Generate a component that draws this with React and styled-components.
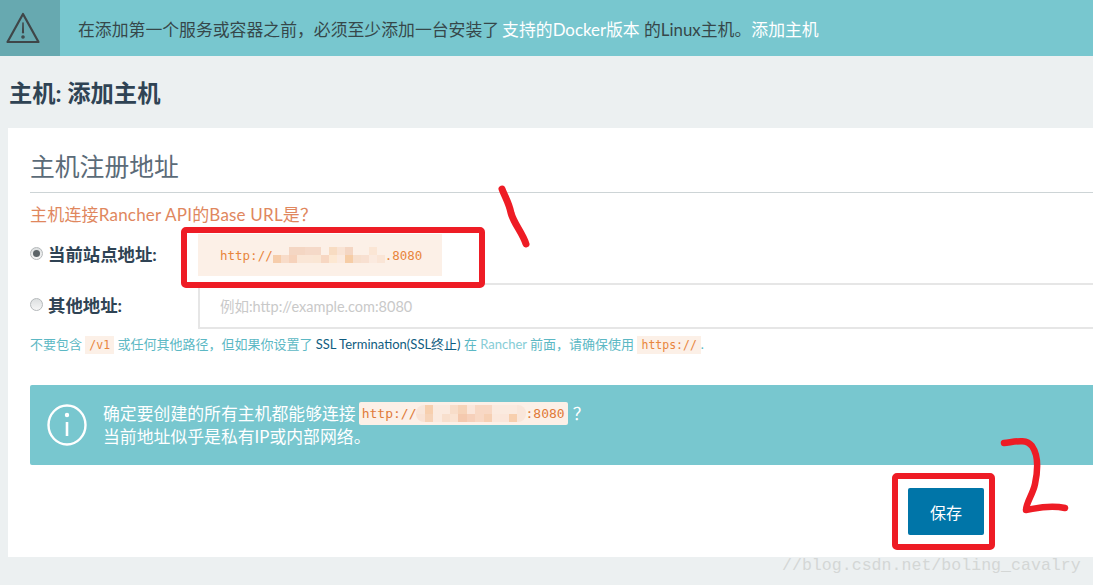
import React from "react";
import styled, { createGlobalStyle } from "styled-components";

const blurTop = [
  "transparent", "transparent", "#f4d6c3", "#f4d6c3", "#f5d9c8", "#f5d9c8", "transparent", "#f8dcc2", "#f9e3d4", "#f4d6c3", "transparent", "transparent", "#fbe6d5", "transparent",
  "#f6cdab", "#f8dcc9", "#f6d2bb", "#fae6d6", "#fae6d6", "#fae6d4", "#f7d7c2", "#fde8d2", "#fbeadf", "#f6cda6", "#f7dfcd", "#f8e0d1", "#fbeadf", "#fae5d6",
];
const blurInfo = [
  "#f9e6da", "#f7cfae", "#fbeadf", "#fbeadf", "#f8ddc9", "#f6d3b8", "#fbe6da", "#f8d8c4", "#f8d8c4", "#fbeadf", "#fbeadf", "#fbeadf", "#f9e6da",
  "#f9e2d4", "#f6d3b8", "#fbeadf", "#f8dfcd", "#fae3d2", "#f4c9ae", "#f6d0ba", "#f8d8c4", "#f6d0b4", "#fbe8dc", "#fbe6da", "#f7cfae", "#f9e6da",
];

const App = () => {
  return (
    <Page>
      <GlobalStyle />
      <Banner>
        <BannerIcon>
          <svg width="36" height="34" viewBox="0 0 36 34" fill="none" stroke="#3f4648" strokeWidth="2.2" strokeLinejoin="round">
            <path d="M18 3 L33.5 31 H2.5 Z" />
            <path d="M18 11.5 L18.6 22 H17.4 Z" strokeWidth="1" fill="#3f4648" />
            <circle cx="18" cy="26" r="0.7" fill="#3f4648" />
          </svg>
        </BannerIcon>
        <BannerText>
          在添加第一个服务或容器之前，必须至少添加一台安装了<a>支持的Docker版本</a> 的Linux主机。<a>添加主机</a>
        </BannerText>
      </Banner>

      <Heading>主机: 添加主机</Heading>

      <Card>
        <SectionTitle>主机注册地址</SectionTitle>
        <Question>主机连接Rancher API的Base URL是？</Question>

        <Row $height={42} $mt={8}>
          <Radio $checked />
          <Label>当前站点地址:</Label>
          <AddressBox>
            <span>http://</span>
            <Mosaic $cols={14} $w={8} $h={8}>
              {blurTop.map((c, i) => (
                <i key={i} style={{ background: c }} />
              ))}
            </Mosaic>
            <span>.8080</span>
          </AddressBox>
        </Row>

        <Row $height={46} $mt={7}>
          <Radio />
          <Label>其他地址:</Label>
          <AddressInput placeholder="例如:http://example.com:8080" readOnly />
        </Row>

        <Hint>
          不要包含 <Code>/v1</Code> 或任何其他路径，但如果你设置了 <b>SSL Termination(SSL终止)</b> 在 <em>Rancher</em> 前面，请确保使用 <Code>https://</Code>.
        </Hint>

        <InfoBox>
          <svg width="42" height="44" viewBox="0 0 42 44" fill="none" stroke="#fff" strokeWidth="2.4">
            <ellipse cx="21" cy="22" rx="18.5" ry="19.5" />
            <path d="M21 19 V33" strokeWidth="2.6" />
            <circle cx="21" cy="12" r="1" fill="#fff" />
          </svg>
          <InfoText>
            <InfoLine>
              确定要创建的所有主机都能够连接
              <InlineUrl>
                http://
                <Mosaic $cols={13} $w={8.4} $h={8.5} $round>
                  {blurInfo.map((c, i) => (
                    <i key={i} style={{ background: c }} />
                  ))}
                </Mosaic>
                :8080
              </InlineUrl>
              ？
            </InfoLine>
            <InfoLine>当前地址似乎是私有IP或内部网络。</InfoLine>
          </InfoText>
        </InfoBox>

        <Footer>
          <SaveButton>保存</SaveButton>
        </Footer>
      </Card>

      <Watermark>//blog.csdn.net/boling_cavalry</Watermark>

      <Marks width="1093" height="585" viewBox="0 0 1093 585" fill="none" stroke="#ee1c25">
        <rect x="184" y="230" width="298" height="55" rx="2" strokeWidth="6" />
        <rect x="895" y="476" width="97" height="71" rx="2" strokeWidth="6" />
        <path d="M502 189 C505 197 509 203 511 213 C514 224 522 232 526 244" strokeWidth="7" strokeLinecap="round" />
        <path d="M1004 443 C1014 442 1026 438 1032 446 C1039 456 1038 470 1035 484 C1033 494 1026 503 1026 510 C1034 509 1048 504 1065 508" strokeWidth="6.5" strokeLinecap="round" strokeLinejoin="round" />
      </Marks>
    </Page>
  );
};

const fontStack = `Lato, "Noto Sans CJK SC", sans-serif`;
const monoStack = `"DejaVu Sans Mono", "Liberation Mono", monospace`;

const GlobalStyle = createGlobalStyle`
  html, body {
    margin: 0;
    padding: 0;
    background: #ecf0f1;
    overflow: hidden;
  }
  * {
    box-sizing: border-box;
  }
`;

const Page = styled.div`
  position: relative;
  width: 1093px;
  height: 585px;
  overflow: hidden;
  background: #ecf0f1;
  font-family: ${fontStack};
`;

const Banner = styled.div`
  display: flex;
  align-items: center;
  height: 56px;
  background: #78c7cf;
`;

const BannerIcon = styled.div`
  display: flex;
  align-items: center;
  width: 60px;
  height: 56px;
  padding-left: 5px;
  background: #67a9b0;
`;

const BannerText = styled.div`
  margin-left: 18px;
  font-size: 16.85px;
  color: #36474a;
  white-space: nowrap;
  > a {
    color: #fff;
  }
  > a:first-child {
    margin-left: 3px;
  }
`;

const Heading = styled.h1`
  margin: 0;
  height: 72px;
  padding: 22px 0 0 9px;
  font-size: 23.3px;
  line-height: 30px;
  font-weight: 700;
  color: #2f4354;
`;

const Card = styled.div`
  margin-left: 8px;
  height: 429px;
  padding: 21px 0 0 22px;
  background: #fff;
`;

const SectionTitle = styled.h2`
  margin: 0;
  height: 44px;
  font-size: 24.8px;
  line-height: 36px;
  font-weight: 400;
  color: #5b6b78;
  border-bottom: 1px solid #cdd4d6;
  white-space: nowrap;
`;

const Question = styled.div`
  margin-top: 11px;
  font-size: 17px;
  line-height: 22px;
  letter-spacing: 0.2px;
  color: #e0875e;
`;

const Row = styled.div`
  display: flex;
  align-items: center;
  height: ${(p) => p.$height}px;
  margin-top: ${(p) => p.$mt}px;
`;

const Radio = styled.span`
  flex: none;
  display: flex;
  align-items: center;
  justify-content: center;
  width: 13px;
  height: 13px;
  margin-bottom: 4px;
  border-radius: 50%;
  border: 1px solid #b4b8ba;
  background: linear-gradient(#dcdfe0, #f6f6f6);
  &::after {
    content: "";
    display: ${(p) => (p.$checked ? "block" : "none")};
    width: 7px;
    height: 7px;
    border-radius: 50%;
    background: #5c6468;
  }
`;

const Label = styled.label`
  width: 155px;
  margin-bottom: 4px;
  padding-left: 5px;
  font-size: 17.4px;
  font-weight: 700;
  color: #2f4354;
  white-space: nowrap;
`;

const AddressBox = styled.div`
  display: flex;
  align-items: center;
  width: 244px;
  height: 42px;
  padding-left: 22px;
  background: #fcf0e7;
  font-family: ${monoStack};
  font-size: 12.5px;
  color: #e8853c;
`;

const Mosaic = styled.span`
  display: inline-grid;
  grid-template-columns: repeat(${(p) => p.$cols}, ${(p) => p.$w}px);
  grid-auto-rows: ${(p) => p.$h}px;
  overflow: hidden;
  border-radius: ${(p) => (p.$round ? "8px" : "0")};
  > i {
    display: block;
  }
`;

const AddressInput = styled.input`
  flex: 1;
  height: 46px;
  padding: 0 0 0 20px;
  border: 2px solid #e6e6e6;
  border-right: 0;
  outline: none;
  font-family: ${fontStack};
  font-size: 14.5px;
  background: #fff;
  &::placeholder {
    color: #c9c9c9;
    opacity: 1;
  }
`;

const Hint = styled.div`
  margin-top: 5px;
  font-size: 13px;
  line-height: 20px;
  color: #5cb8c4;
  white-space: nowrap;
  > b {
    font-weight: 400;
    color: #0f5c80;
  }
  > em {
    font-style: normal;
    color: #86cdd6;
  }
`;

const Code = styled.code`
  padding: 2px 4px;
  background: #fcf0e7;
  font-family: ${monoStack};
  font-size: 11.5px;
  color: #e8853c;
`;

const InfoBox = styled.div`
  display: flex;
  align-items: center;
  gap: 15px;
  height: 80px;
  margin-top: 30px;
  padding-left: 16px;
  background: #78c7cf;
  border-radius: 2px 0 0 2px;
  color: #fff;
`;

const InfoText = styled.div`
  font-size: 16.85px;
  line-height: 23px;
`;

const InfoLine = styled.div`
  white-space: nowrap;
`;

const InlineUrl = styled.span`
  display: inline-flex;
  align-items: center;
  height: 23px;
  margin: 0 5px 0 3px;
  padding: 0 3px;
  vertical-align: top;
  background: #fcf0e7;
  border-radius: 2px;
  font-family: ${monoStack};
  font-size: 13px;
  color: #e07b3a;
`;

const Footer = styled.div`
  display: flex;
  justify-content: flex-end;
  margin-top: 23px;
  padding-right: 109px;
`;

const SaveButton = styled.button`
  width: 76px;
  height: 47px;
  border: 0;
  border-radius: 2px;
  background: #0075a8;
  color: #fff;
  font-family: ${fontStack};
  font-size: 16px;
`;

const Watermark = styled.div`
  position: absolute;
  left: 782px;
  top: 556px;
  font-family: "Liberation Mono", monospace;
  font-size: 16.6px;
  line-height: 20px;
  color: #d4d7d6;
  white-space: nowrap;
`;

const Marks = styled.svg`
  position: absolute;
  left: 0;
  top: 0;
  pointer-events: none;
`;

export default App;
